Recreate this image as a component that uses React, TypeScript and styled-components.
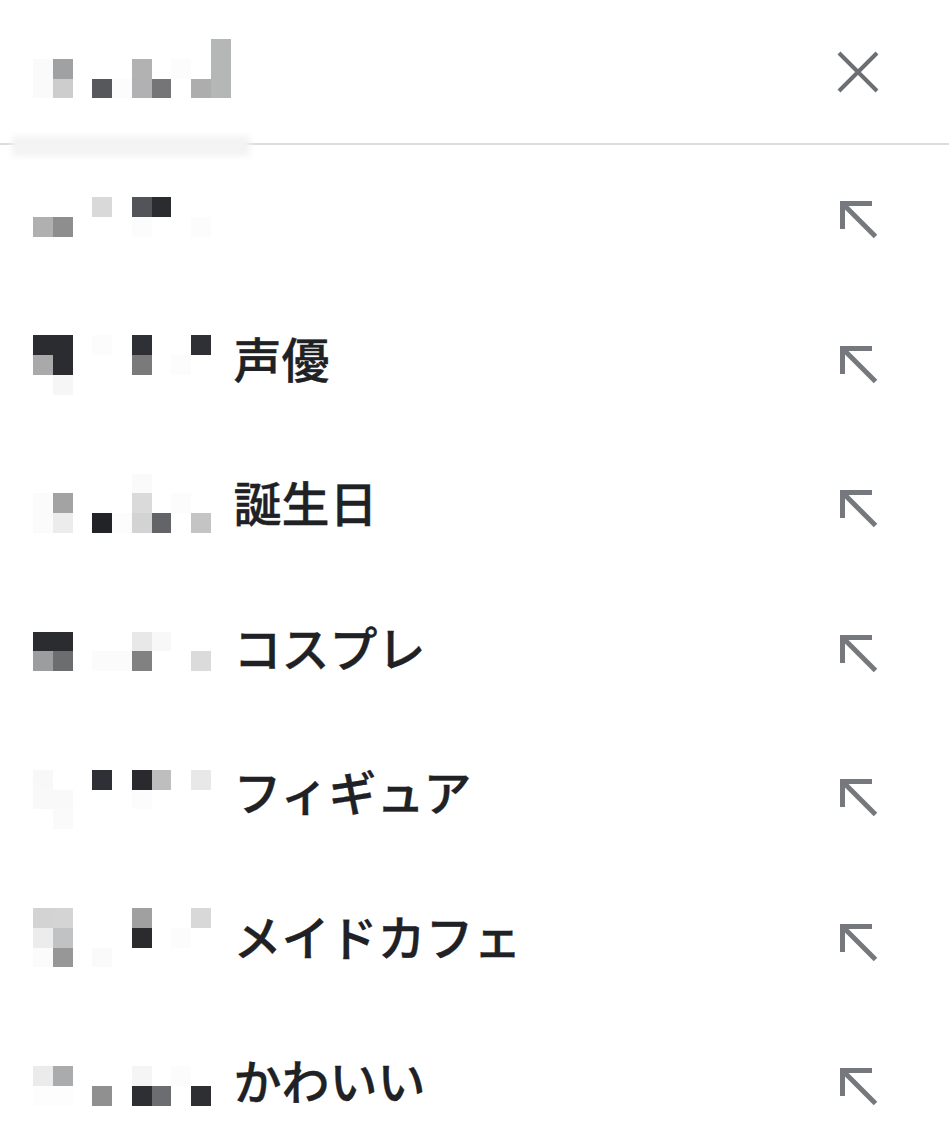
import React from 'react';
import styled, { createGlobalStyle } from 'styled-components';

const GlobalStyle = createGlobalStyle`
  html, body {
    margin: 0;
    padding: 0;
    background: #ffffff;
    overflow: hidden;
  }
  body {
    font-family: "Noto Sans CJK JP", "Noto Sans", sans-serif;
  }
`;

const Page = styled.div`
  width: 949px;
  background: #ffffff;
`;

const Header = styled.header`
  position: relative;
  display: flex;
  align-items: center;
  height: 143px;
  padding: 0 70px 0 33px;
  border-bottom: 2px solid #dadce0;

  &::after {
    content: '';
    position: absolute;
    left: 12px;
    top: 136px;
    width: 238px;
    height: 20px;
    background: #f3f3f3;
    filter: blur(3px);
  }
`;

const Spacer = styled.div`
  flex: 1;
`;

const CloseButton = styled.button`
  display: flex;
  align-items: center;
  justify-content: center;
  padding: 0;
  border: none;
  background: none;
  color: #6b6e72;
`;

const List = styled.ul`
  list-style: none;
  margin: 0;
  padding: 0;
`;

const Row = styled.li`
  display: flex;
  align-items: center;
  height: 144.5px;
  padding: 0 70px 0 33px;
`;

const MosaicGrid = styled.div<{ $top: number }>`
  align-self: flex-start;
  margin-top: ${p => p.$top}px;
  display: grid;
  grid-template-columns: repeat(10, 19.75px);
  grid-auto-rows: 19.75px;
  flex-shrink: 0;
`;

const Tile = styled.span<{ $c: string }>`
  background: ${p => p.$c || 'transparent'};
`;

const Label = styled.span`
  flex: 1;
  margin-left: 3px;
  padding-bottom: 10px;
  font-size: 48px;
  font-weight: 500;
  line-height: 1;
  color: #202124;
  -webkit-text-stroke: 0.35px #202124;
  white-space: nowrap;
`;

const ArrowIcon = styled.svg`
  margin-top: 6px;
  color: #75787c;
  flex-shrink: 0;
`;

type Cells = string[][];

const Mosaic: React.FC<{ top: number; cells: Cells }> = ({ top, cells }) => (
  <MosaicGrid $top={top}>
    {cells.flatMap((r, i) =>
      Array.from({ length: 10 }, (_, j) => <Tile key={`${i}-${j}`} $c={r[j] || ''} />)
    )}
  </MosaicGrid>
);

const headerCells: Cells = [
  ['', '', '', '', '', '', '', '', '', '#b5b6b6'],
  ['#fafafa', '#a0a1a2', '', '', '', '#b2b2b3', '', '#fcfcfc', '', '#b5b6b6'],
  ['#fafafa', '#cdcdcd', '', '#57585b', '#fcfcfc', '#b1b1b3', '#757577', '', '#adadae', '#b5b6b6'],
];

const rows: { top: number; cells: Cells; text: string }[] = [
  {
    top: 52,
    text: '',
    cells: [
      ['', '', '', '#d9d9d9', '', '#535459', '#2b2c2f', '', '', ''],
      ['#b0b0b0', '#8e8e8e', '', '', '', '#fcfcfc', '', '', '#fcfcfc', ''],
    ],
  },
  {
    top: 45.75,
    text: '声優',
    cells: [
      ['#2b2c2f', '#2b2c2f', '', '#fcfcfc', '', '#2f3035', '', '', '#2f3035', ''],
      ['#a9a9a9', '#2b2c2f', '', '', '', '#7a7a7a', '', '#fcfcfc', '', ''],
      ['', '#f6f6f6', '', '', '', '', '', '', '', ''],
    ],
  },
  {
    top: 39.5,
    text: '誕生日',
    cells: [
      ['', '', '', '', '', '#fafafa', '', '', '', ''],
      ['#fbfbfb', '#a3a3a3', '', '', '', '#dadada', '', '#fcfcfc', '', ''],
      ['#fbfbfb', '#ececec', '', '#222326', '#fcfcfc', '#d3d3d4', '#636468', '', '#c4c4c4', ''],
    ],
  },
  {
    top: 53,
    text: 'コスプレ',
    cells: [
      ['#2b2c2f', '#2b2c2f', '', '', '', '#e8e8e8', '#f8f8f8', '', '', ''],
      ['#9c9d9e', '#6c6d6e', '', '#fbfbfb', '#fbfbfb', '#818182', '', '', '#dbdbdb', ''],
    ],
  },
  {
    top: 46.75,
    text: 'フィギュア',
    cells: [
      ['#f8f8f8', '', '', '#2f3035', '', '#2a2a2e', '#bebebe', '', '#e8e8e8', ''],
      ['#f9f9f9', '#f9f9f9', '', '', '', '#fcfcfc', '', '', '', ''],
      ['', '#fafafa', '', '', '', '', '', '', '', ''],
    ],
  },
  {
    top: 40.5,
    text: 'メイドカフェ',
    cells: [
      ['#d3d3d3', '#d4d4d4', '', '', '', '#a0a0a1', '', '', '#d8d8d8', ''],
      ['#ececec', '#c1c2c3', '', '', '', '#2b2b2e', '', '#fcfcfc', '', ''],
      ['#fbfbfb', '#979797', '', '#fafafa', '', '', '', '', '', ''],
    ],
  },
  {
    top: 54,
    text: 'かわいい',
    cells: [
      ['#ebebeb', '#aaabac', '', '', '', '#f5f5f5', '', '#fcfcfc', '', ''],
      ['#fdfdfd', '#fdfdfd', '', '#909091', '', '#2e2f33', '#6c6d70', '', '#2e2f33', ''],
    ],
  },
];

const Arrow = () => (
  <ArrowIcon width="40" height="40" viewBox="0 0 40 40" fill="none">
    <path d="M3.5 29V3.5H33" stroke="currentColor" strokeWidth="5" strokeLinejoin="miter" />
    <path d="M4 4L36.5 36.5" stroke="currentColor" strokeWidth="5" />
  </ArrowIcon>
);

const App: React.FC = () => {
  return (
    <Page>
      <GlobalStyle />
      <Header>
        <Mosaic top={39} cells={headerCells} />
        <Spacer />
        <CloseButton aria-label="閉じる">
          <svg width="42" height="42" viewBox="0 0 42 42" fill="none">
            <path d="M2 2L40 40M40 2L2 40" stroke="currentColor" strokeWidth="4" />
          </svg>
        </CloseButton>
      </Header>
      <List>
        {rows.map((r, i) => (
          <Row key={i}>
            <Mosaic top={r.top} cells={r.cells} />
            <Label>{r.text}</Label>
            <Arrow />
          </Row>
        ))}
      </List>
    </Page>
  );
};

export default App;
